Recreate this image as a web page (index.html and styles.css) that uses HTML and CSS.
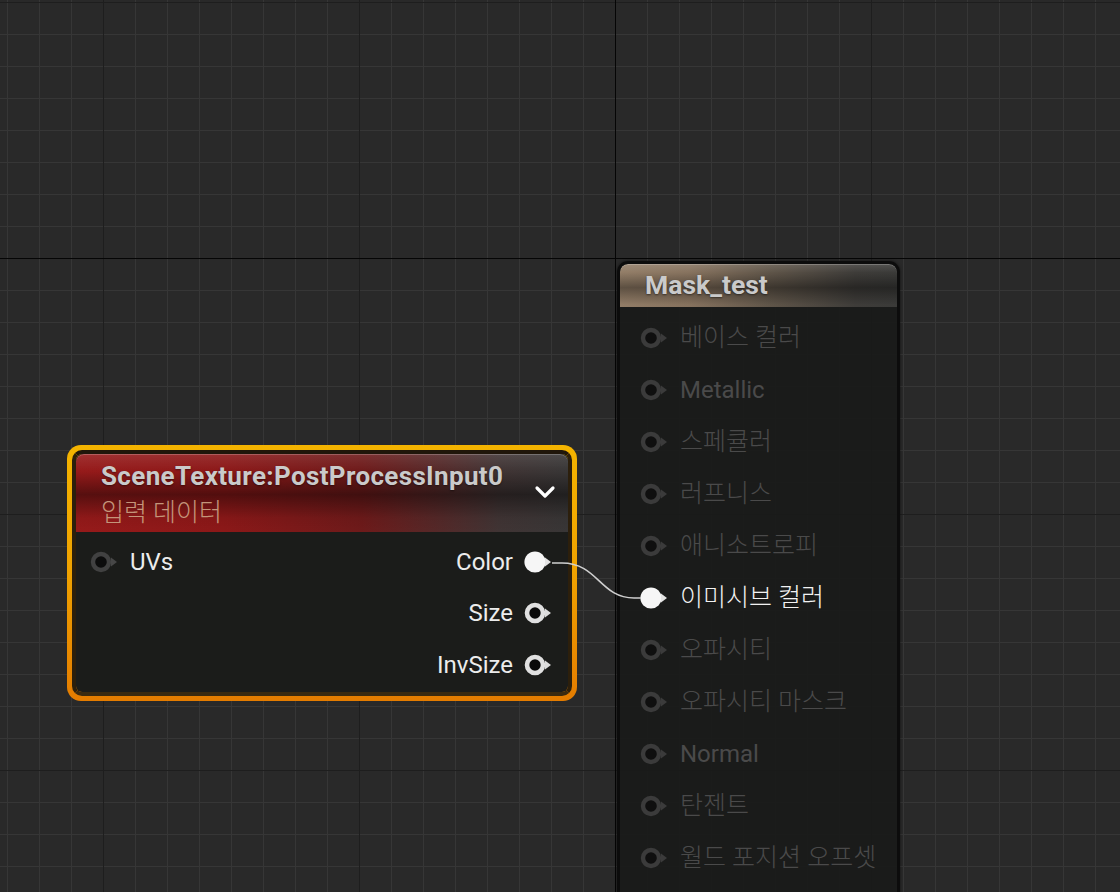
FILE: index.html
```html
<!DOCTYPE html>
<html lang="ko">
<head>
<meta charset="utf-8">
<title>Material Graph</title>
<link rel="stylesheet" href="styles.css">
</head>
<body>
<div class="canvas">

  <div class="node node-left selected">
    <div class="node-inner">
      <div class="header header-red">
        <div class="header-text">
          <div class="title">SceneTexture:PostProcessInput0</div>
          <div class="subtitle ko">입력 데이터</div>
        </div>
        <svg class="chevron" width="22" height="14" viewBox="0 0 22 14"><polyline points="3,3 11,11 19,3" fill="none" stroke="#ffffff" stroke-width="3.2" stroke-linecap="round" stroke-linejoin="round"/></svg>
      </div>
      <div class="body body-left">
        <div class="row">
          <div class="in">
            <svg class="pin soft" width="30" height="24" viewBox="0 0 30 24"><circle cx="11" cy="12" r="8" fill="#0c0c0c" stroke="#414141" stroke-width="4.4"/><polygon points="21,7.5 27,12 21,16.5" fill="#474747"/></svg>
            <span class="label">UVs</span>
          </div>
          <div class="out">
            <span class="label">Color</span>
            <svg class="pin" width="30" height="24" viewBox="0 0 30 24"><circle cx="11" cy="12" r="10.6" fill="#f6f6f6"/><polygon points="21,7.5 27,12 21,16.5" fill="#e4e4e4"/></svg>
          </div>
        </div>
        <div class="row">
          <div class="out">
            <span class="label">Size</span>
            <svg class="pin" width="30" height="24" viewBox="0 0 30 24"><circle cx="11" cy="12" r="8" fill="#0a0a0a" stroke="#e0e0e0" stroke-width="4.6"/><polygon points="21,7.5 27,12 21,16.5" fill="#dcdcdc"/></svg>
          </div>
        </div>
        <div class="row">
          <div class="out">
            <span class="label">InvSize</span>
            <svg class="pin" width="30" height="24" viewBox="0 0 30 24"><circle cx="11" cy="12" r="8" fill="#0a0a0a" stroke="#e0e0e0" stroke-width="4.6"/><polygon points="21,7.5 27,12 21,16.5" fill="#dcdcdc"/></svg>
          </div>
        </div>
      </div>
    </div>
  </div>

  <div class="node node-right">
    <div class="header header-tan">
      <div class="title">Mask_test</div>
    </div>
    <div class="body body-right">
      <div class="row dim"><svg class="pin soft" width="30" height="24" viewBox="0 0 30 24"><circle cx="11" cy="12" r="8" fill="#0f0f0f" stroke="#3b3b3b" stroke-width="4.4"/><polygon points="21,7.5 27,12 21,16.5" fill="#3b3b3b"/></svg><span class="label ko">베이스 컬러</span></div>
      <div class="row dim"><svg class="pin soft" width="30" height="24" viewBox="0 0 30 24"><circle cx="11" cy="12" r="8" fill="#0f0f0f" stroke="#3b3b3b" stroke-width="4.4"/><polygon points="21,7.5 27,12 21,16.5" fill="#3b3b3b"/></svg><span class="label">Metallic</span></div>
      <div class="row dim"><svg class="pin soft" width="30" height="24" viewBox="0 0 30 24"><circle cx="11" cy="12" r="8" fill="#0f0f0f" stroke="#3b3b3b" stroke-width="4.4"/><polygon points="21,7.5 27,12 21,16.5" fill="#3b3b3b"/></svg><span class="label ko">스페큘러</span></div>
      <div class="row dim"><svg class="pin soft" width="30" height="24" viewBox="0 0 30 24"><circle cx="11" cy="12" r="8" fill="#0f0f0f" stroke="#3b3b3b" stroke-width="4.4"/><polygon points="21,7.5 27,12 21,16.5" fill="#3b3b3b"/></svg><span class="label ko">러프니스</span></div>
      <div class="row dim"><svg class="pin soft" width="30" height="24" viewBox="0 0 30 24"><circle cx="11" cy="12" r="8" fill="#0f0f0f" stroke="#3b3b3b" stroke-width="4.4"/><polygon points="21,7.5 27,12 21,16.5" fill="#3b3b3b"/></svg><span class="label ko">애니소트로피</span></div>
      <div class="row active"><svg class="pin" width="30" height="24" viewBox="0 0 30 24"><circle cx="11" cy="12" r="10.6" fill="#f6f6f6"/><polygon points="21,7.5 27,12 21,16.5" fill="#e4e4e4"/></svg><span class="label ko">이미시브 컬러</span></div>
      <div class="row dim"><svg class="pin soft" width="30" height="24" viewBox="0 0 30 24"><circle cx="11" cy="12" r="8" fill="#0f0f0f" stroke="#3b3b3b" stroke-width="4.4"/><polygon points="21,7.5 27,12 21,16.5" fill="#3b3b3b"/></svg><span class="label ko">오파시티</span></div>
      <div class="row dim"><svg class="pin soft" width="30" height="24" viewBox="0 0 30 24"><circle cx="11" cy="12" r="8" fill="#0f0f0f" stroke="#3b3b3b" stroke-width="4.4"/><polygon points="21,7.5 27,12 21,16.5" fill="#3b3b3b"/></svg><span class="label ko">오파시티 마스크</span></div>
      <div class="row dim"><svg class="pin soft" width="30" height="24" viewBox="0 0 30 24"><circle cx="11" cy="12" r="8" fill="#0f0f0f" stroke="#3b3b3b" stroke-width="4.4"/><polygon points="21,7.5 27,12 21,16.5" fill="#3b3b3b"/></svg><span class="label">Normal</span></div>
      <div class="row dim"><svg class="pin soft" width="30" height="24" viewBox="0 0 30 24"><circle cx="11" cy="12" r="8" fill="#0f0f0f" stroke="#3b3b3b" stroke-width="4.4"/><polygon points="21,7.5 27,12 21,16.5" fill="#3b3b3b"/></svg><span class="label ko">탄젠트</span></div>
      <div class="row dim"><svg class="pin soft" width="30" height="24" viewBox="0 0 30 24"><circle cx="11" cy="12" r="8" fill="#0f0f0f" stroke="#3b3b3b" stroke-width="4.4"/><polygon points="21,7.5 27,12 21,16.5" fill="#3b3b3b"/></svg><span class="label ko">월드 포지션 오프셋</span></div>
    </div>
  </div>

  <svg class="wires" width="1120" height="892" viewBox="0 0 1120 892">
    <path d="M552 563 L562 563 C598 563, 600 598, 634 598 L641 598" fill="none" stroke="#cfcfcf" stroke-width="1.6"/>
  </svg>

</div>
</body>
</html>
```

FILE: styles.css
```css
html, body {
  margin: 0;
  padding: 0;
  background: #282828;
}

.canvas {
  position: relative;
  width: 1120px;
  height: 892px;
  overflow: hidden;
  font-family: Roboto, "Noto Sans CJK KR", sans-serif;
  background-color: #292929;
  background-image:
    linear-gradient(90deg, transparent 615px, #050505 615px, #050505 616px, transparent 616px),
    linear-gradient(180deg, transparent 258px, #050505 258px, #050505 259px, transparent 259px),
    linear-gradient(90deg, #1e1e1e 1px, transparent 1px),
    linear-gradient(180deg, #1e1e1e 1px, transparent 1px),
    linear-gradient(90deg, #363636 1px, transparent 1px),
    linear-gradient(180deg, #363636 1px, transparent 1px);
  background-size:
    100% 100%,
    100% 100%,
    256px 100%,
    100% 256px,
    32px 100%,
    100% 32px;
  background-position:
    0 0,
    0 0,
    103px 0,
    0 2px,
    7px 0,
    0 2px;
}

/* ---------- nodes ---------- */
.node {
  position: absolute;
  box-sizing: border-box;
}

.node-left {
  left: 67px;
  top: 445px;
  width: 510px;
  height: 256px;
  padding: 5px;
  border-radius: 14px;
  background: linear-gradient(180deg, #f4b400 0%, #f0a200 50%, #e47c00 100%);
}

.node-inner {
  box-sizing: border-box;
  height: 100%;
  border-radius: 10px;
  border: 4px solid #20160a;
  border-bottom-color: #3a2a10;
  border-left-color: #2c1f0c;
  border-right-color: #2c1f0c;
  background: #1b1c1a;
  background-clip: padding-box;
  overflow: hidden;
  display: flex;
  flex-direction: column;
}

.node-right {
  left: 617px;
  top: 261px;
  width: 283px;
  height: 700px;
  border: 3px solid #0c0c0c;
  border-radius: 11px;
  background: rgba(26, 27, 25, 0.94);
  background-clip: padding-box;
  box-shadow: 0 0 3px rgba(0, 0, 0, 0.6);
  overflow: hidden;
  display: flex;
  flex-direction: column;
}

/* ---------- headers ---------- */
.header {
  flex: none;
  display: flex;
  align-items: center;
  box-sizing: border-box;
  border-radius: 8px 8px 0 0;
  box-shadow: inset 0 1px 0 rgba(255, 255, 255, 0.22);
}

.header-red {
  height: 78px;
  padding: 0 12px 0 25px;
  background:
    linear-gradient(180deg, rgba(255,255,255,0.10) 0%, rgba(0,0,0,0) 22%, rgba(0,0,0,0.42) 52%, rgba(0,0,0,0.05) 82%, rgba(0,0,0,0) 100%),
    linear-gradient(90deg, #961a1a 0%, #8c1818 30%, #6e1a1a 58%, #403434 86%, #383636 100%);
}

.header-tan {
  height: 43px;
  padding: 0 0 0 25px;
  border-radius: 8px 8px 0 0;
  background:
    linear-gradient(180deg, rgba(255,255,255,0.12) 0%, rgba(0,0,0,0) 20%, rgba(0,0,0,0.36) 55%, rgba(0,0,0,0) 95%),
    linear-gradient(90deg, #927d67 0%, #86725e 25%, #5e5448 55%, #3e3c39 85%, #3a3a38 100%);
}

.header-text {
  flex: 1;
  display: flex;
  flex-direction: column;
  align-self: flex-start;
  padding-top: 7px;
}

.title {
  font-weight: 700;
  font-size: 26px;
  line-height: 30px;
  letter-spacing: 0.35px;
  color: #cacaca;
  text-shadow: 0 1px 2px rgba(0, 0, 0, 0.45);
  white-space: nowrap;
}

.header-tan .title {
  font-size: 26.5px;
  letter-spacing: 0;
  margin-top: -2px;
}

.subtitle {
  font-size: 25px;
  line-height: 28px;
  margin-top: 8px;
  color: #c4957a;
  white-space: nowrap;
}

.ko {
  font-weight: 300;
}

.chevron {
  flex: none;
  margin-top: -3px;
}

/* ---------- body rows ---------- */
.body {
  display: flex;
  flex-direction: column;
}

.body-left {
  padding-top: 4px;
}

.body-left .row {
  height: 51.5px;
  display: flex;
  align-items: center;
  justify-content: space-between;
}

.in, .out {
  display: flex;
  align-items: center;
}

.in {
  padding-left: 14px;
}

.out {
  margin-left: auto;
  padding-right: 14px;
}

.in .label {
  margin-left: 10px;
}

.out .label {
  margin-right: 11px;
}

.label {
  font-size: 24px;
  line-height: 28px;
  color: #ececec;
  white-space: nowrap;
}

.label.ko {
  font-size: 25px;
}

.pin {
  flex: none;
  display: block;
}

.pin.soft {
  filter: blur(0.4px);
}

.body-right {
  padding-top: 5px;
}

.body-right .row {
  height: 52px;
  display: flex;
  align-items: center;
  padding-left: 20px;
}

.body-right .label {
  margin-left: 10px;
}

.row.dim .label {
  color: #4a4a4a;
}

.row.active .label {
  color: #f2f2f2;
}

/* ---------- wires ---------- */
.wires {
  position: absolute;
  left: 0;
  top: 0;
  pointer-events: none;
}
```
